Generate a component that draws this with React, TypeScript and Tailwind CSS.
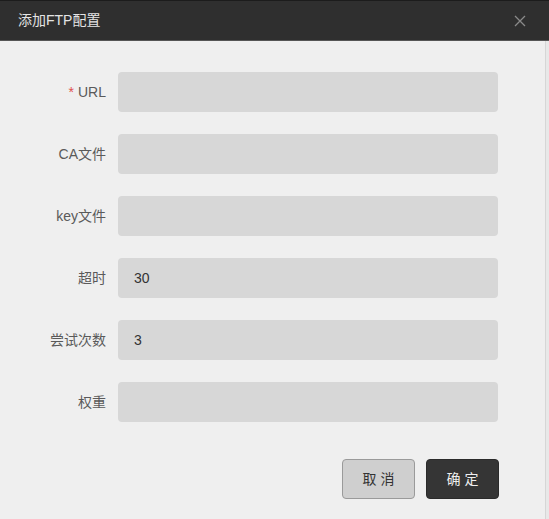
import React from "react";

const rows: { label: string; value: string; required?: boolean }[] = [
  { label: "URL", value: "", required: true },
  { label: "CA文件", value: "" },
  { label: "key文件", value: "" },
  { label: "超时", value: "30" },
  { label: "尝试次数", value: "3" },
  { label: "权重", value: "" },
];

export default function App() {
  return (
    <div
      className="w-[549px] h-[519px] flex flex-col overflow-hidden bg-[#efefef]"
      style={{ fontFamily: '"Liberation Sans", "Noto Sans CJK SC", sans-serif' }}
    >
      <div className="h-[41px] shrink-0 flex items-center justify-between bg-[#2f2f2f] border-t border-t-[#1c1c1c] border-b border-b-[#555] pl-[18px] pr-[23px]">
        <span className="text-[14px] text-[#e4e4e4]">添加FTP配置</span>
        <svg width="12" height="12" viewBox="0 0 12 12" className="text-[#8a8a8a]">
          <path d="M1 1L11 11M11 1L1 11" stroke="currentColor" strokeWidth="1.3" />
        </svg>
      </div>
      <div className="flex flex-1">
        <div className="w-[545px] flex flex-col pt-[31px] bg-[#efefef]">
          <div className="flex flex-col gap-[22px]">
            {rows.map((r) => (
              <div key={r.label} className="flex items-center">
                <div className="w-[106px] text-right text-[14px] text-[#5a5a5a]">
                  {r.required && <span className="text-[#e05050] mr-[4px]">*</span>}
                  {r.label}
                </div>
                <div className="ml-[12px] w-[380px] h-[40px] rounded-[4px] bg-[#d7d7d7] flex items-center pl-[16px] text-[14px] text-[#333]">
                  {r.value}
                </div>
              </div>
            ))}
          </div>
          <div className="flex justify-end gap-[11px] mt-[37px] pr-[46px]">
            <button className="w-[73px] h-[40px] rounded-[4px] bg-[#cfcfcf] border border-[#9a9a9a] text-[14px] text-[#333] tracking-[4px] pl-[4px]">
              取消
            </button>
            <button className="w-[73px] h-[40px] rounded-[4px] bg-[#353535] border border-[#2a2a2a] text-[14px] text-[#eee] tracking-[4px] pl-[4px]">
              确定
            </button>
          </div>
        </div>
        <div className="flex-1 bg-[#e8e8e8] border-l border-l-[#d6d6d6]" />
      </div>
    </div>
  );
}
